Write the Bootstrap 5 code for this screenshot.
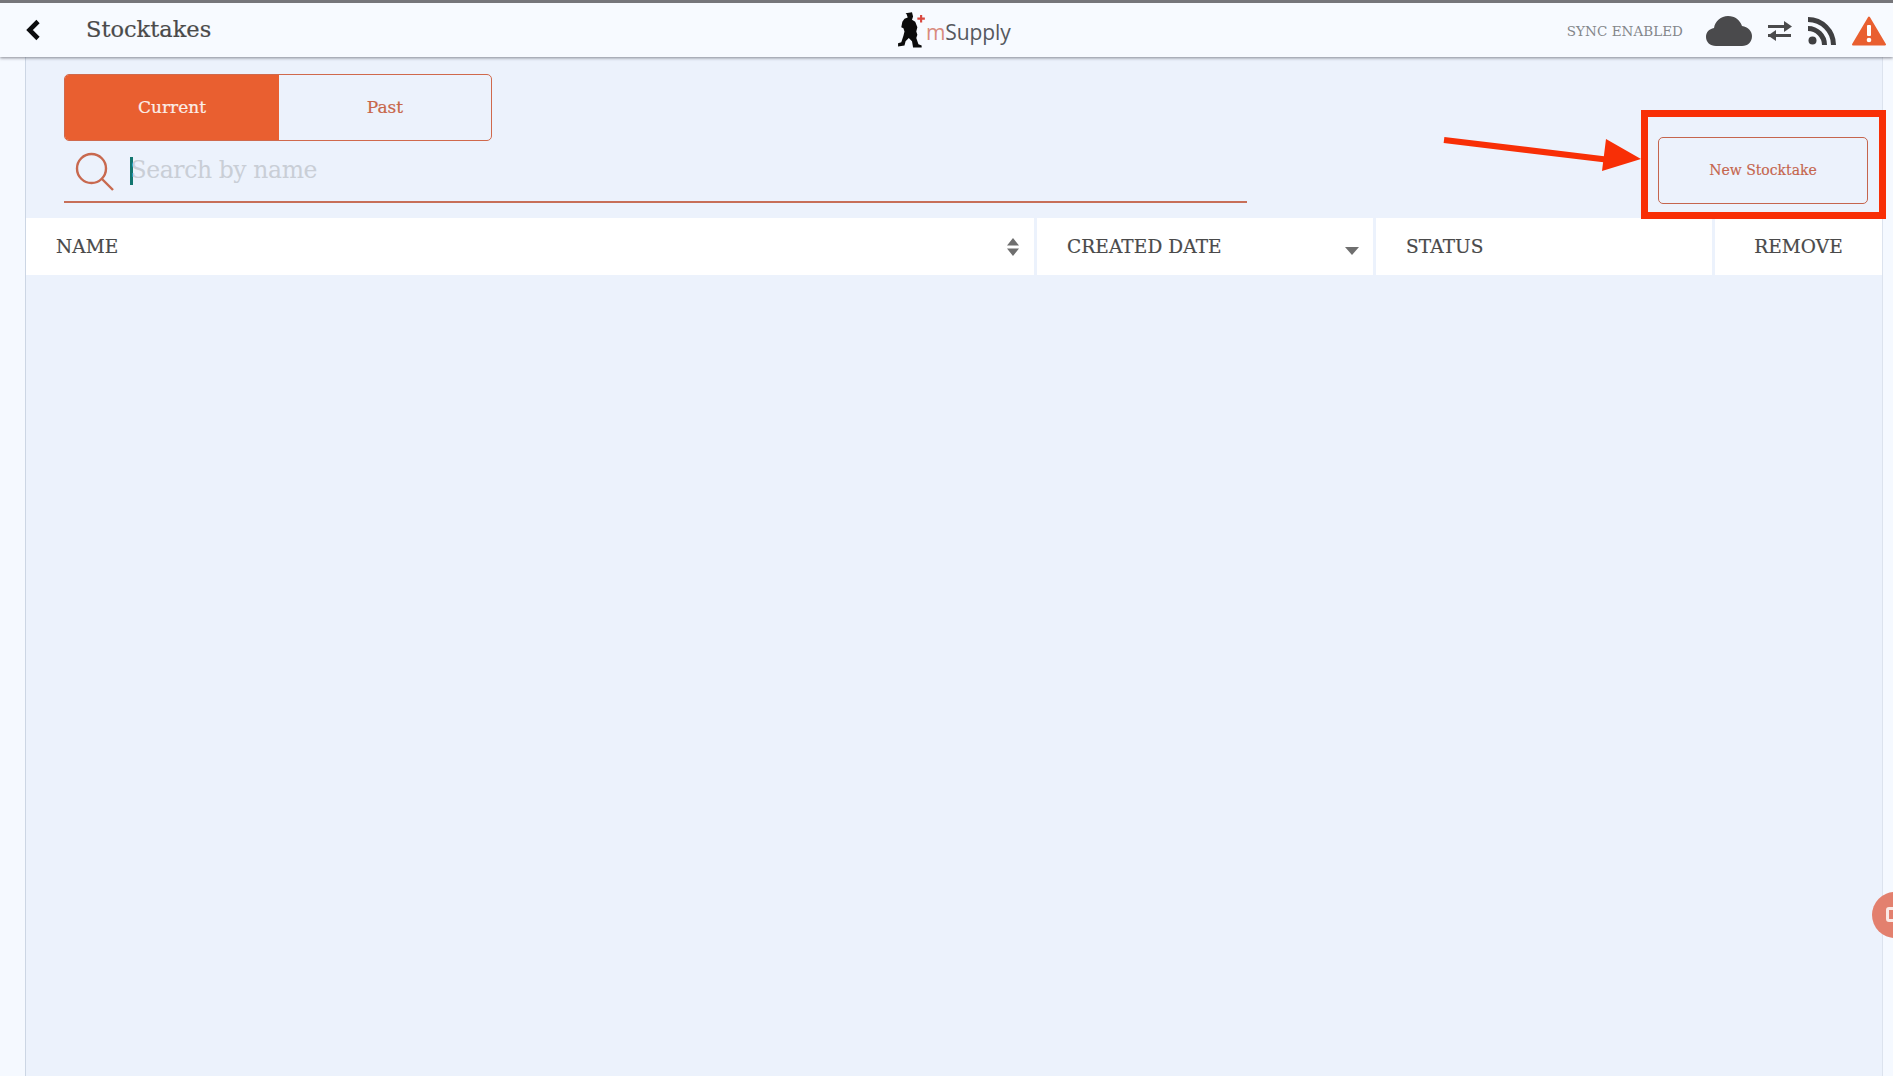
<!DOCTYPE html>
<html lang="en">
<head>
<meta charset="utf-8">
<title>Stocktakes</title>
<link href="https://cdn.jsdelivr.net/npm/bootstrap@5.3.0/dist/css/bootstrap.min.css" rel="stylesheet">
<style>
html,body{height:100%;overflow:hidden}
body{background:#f5f9ff;font-family:"DejaVu Serif",serif;color:#4a4a4a;border-top:3px solid #76767a;position:relative}
.topbar{height:54px;background:#f7faff;box-shadow:0 1px 3px rgba(60,60,70,.6);position:relative;z-index:2;padding:0}
.back-zone{width:86px}
.back-icon{margin-left:26px}
.page-title{font-size:22.5px;letter-spacing:0;color:#4a4a4a;-webkit-text-stroke:.2px #4a4a4a}
.logo-zone{position:absolute;left:897px;top:8px}
.logo-text{font-family:"Open Sans","Noto Sans",sans-serif;font-size:21px;letter-spacing:-.1px;color:#55585e;line-height:1;margin-top:11px;margin-left:-1px}
.logo-m{color:#d98a7d}
.sync-label{font-size:13.5px;letter-spacing:.05px;color:#84868a;margin-right:23px}
.status-icons{padding-right:7px;margin-top:2px}
.main-area{height:1019px;margin-left:25px;margin-right:10px;background:#ecf2fc;border-left:1.5px solid #ccd6e4;border-right:1px solid #dce3ee}
.tool-row{padding:17px 14px 0 38px;height:161px}
.tool-left{width:1183px}
.seg{width:428px;height:67px;border:1px solid #d0694c;border-radius:5px;overflow:hidden}
.seg-item{flex:1;border:0;background:transparent;color:#c8664a;font-family:inherit;font-size:17px;letter-spacing:0;padding:0;-webkit-text-stroke:.2px currentColor}
.seg-on{background:#e95f30;color:#fbeee8;flex:0 0 214px}
.search-row{height:62px;border-bottom:2px solid #c76f58}
.search-icon{margin-left:11px;margin-top:1px}
.caret-bar{width:2.500px;height:28px;background:#12766f;margin-left:15px;flex:none}
.search-ph{font-size:23.5px;letter-spacing:-.4px;color:#c9ced6;margin-left:-2px}
.new-btn{width:210px;height:67px;background:transparent;border:1px solid #c5654d;border-radius:5px;color:#c5654d;font-family:inherit;font-size:14px;letter-spacing:0;padding:0;margin-top:63px;-webkit-text-stroke:.15px currentColor}
.head-row{height:57px;gap:3px}
.head-cell{background:#fff;color:#4a4a4a;font-size:18.5px;letter-spacing:.1px;height:57px;padding-left:30px;padding-right:14px;-webkit-text-stroke:.2px #4a4a4a}
.cell-name{flex:0 0 1008px}
.cell-date{flex:0 0 336px}
.cell-status{flex:0 0 336px}
.cell-remove{flex:1;padding:0;justify-content:center!important}
.annot-box{position:absolute;left:1641px;top:107px;width:245px;height:109px;border:7px solid #f82f06;z-index:3}
.annot-arrow{position:absolute;left:1440px;top:125px;z-index:3}
.fab-bubble{position:absolute;left:1872px;top:889px;width:46px;height:46px;border-radius:50%;background:#e3806e;z-index:3}
.fab-glyph{position:absolute;left:14px;top:15px;width:16px;height:15px;border:3px solid #fbe9e5;border-radius:3px}
</style>
</head>
<body>
<nav class="navbar topbar d-flex align-items-center justify-content-between flex-nowrap">
  <div class="d-flex align-items-center">
    <div class="back-zone">
      <svg class="back-icon d-block" width="15" height="22" viewBox="0 0 15 22"><path d="M12 2.500 3.500 11 12 19.500" fill="none" stroke="#0c0c0e" stroke-width="4.600"/></svg>
    </div>
    <span class="page-title">Stocktakes</span>
  </div>
  <div class="logo-zone d-flex align-items-start">
    <svg width="30" height="41" viewBox="0 0 28 38"><path d="M8 2l6-1 1 4-1 3 3 2 2 5-1 4 1 3-1 3 2 6 3 1v2h-8l-1-6-3-3-3 3-1 4-6 1v-3l3-1 2-6 1-4-1-3-2-1 1-5 2-3 3-1-1-3z" fill="#0b0b0b"/><path d="M19 6h2.500V3.500h2V6H26v2h-2.500v2.500h-2V8H19z" fill="#d9483f"/></svg>
    <span class="logo-text"><span class="logo-m">m</span>Supply</span>
  </div>
  <div class="d-flex align-items-center status-icons">
    <span class="sync-label">SYNC ENABLED</span>
    <svg width="46" height="32" viewBox="0 0 46 32"><path d="M10 31C4 31 0 27 0 22c0-5 3-8 8-9 1-7 7-12 14-12 7 0 12 4 14 10 6 1 10 5 10 10 0 6-4 10-10 10z" fill="#4a4a4c"/></svg>
    <svg class="ms-3" width="24" height="20" viewBox="0 0 24 20"><path d="M0 5.500h17M0 14.500h23" stroke="#4a4a4c" stroke-width="2.800"/><path d="M16 0l8 5.500-8 5.500z" fill="#4a4a4c"/><path d="M8 9 0 14.500 8 20z" fill="#4a4a4c"/></svg>
    <svg class="ms-3" width="28" height="28" viewBox="0 0 28 28"><circle cx="4.500" cy="23.500" r="4" fill="#3f3f41"/><path d="M0 11.500C9 11.500 16.500 19 16.500 28M0 2.500C14 2.500 25.500 14 25.500 28" fill="none" stroke="#3f3f41" stroke-width="5"/></svg>
    <svg class="ms-3" width="34" height="30" viewBox="0 0 34 30"><path d="M17 1.500 33 28.500H1z" fill="#e95f30" stroke="#e95f30" stroke-width="2" stroke-linejoin="round"/><rect x="15" y="9" width="4" height="11" rx="1" fill="#fff"/><circle cx="17" cy="24" r="2.300" fill="#fff"/></svg>
  </div>
</nav>
<main class="main-area">
  <div class="tool-row d-flex justify-content-between align-items-start">
    <div class="tool-left">
      <div class="seg d-flex">
        <button type="button" class="seg-item seg-on">Current</button>
        <button type="button" class="seg-item">Past</button>
      </div>
      <div class="search-row d-flex align-items-center">
        <svg class="search-icon" width="40" height="40" viewBox="0 0 40 40"><circle cx="16.500" cy="16.500" r="14.500" fill="none" stroke="#c8694f" stroke-width="2.400"/><path d="M27 27l11 11" stroke="#c8694f" stroke-width="2.400"/></svg>
        <span class="caret-bar"></span>
        <span class="search-ph">Search by name</span>
      </div>
    </div>
    <button type="button" class="new-btn">New Stocktake</button>
  </div>
  <div class="head-row d-flex">
    <div class="head-cell cell-name d-flex align-items-center justify-content-between">
      <span>NAME</span>
      <svg width="14" height="20" viewBox="0 0 14 20"><path d="M7 1 13 8.500H1zM7 19 1 11.500H13z" fill="#6f6f6f"/></svg>
    </div>
    <div class="head-cell cell-date d-flex align-items-center justify-content-between">
      <span>CREATED DATE</span>
      <svg class="mt-2" width="14" height="8" viewBox="0 0 14 8"><path d="M0 0H14L7 8z" fill="#6f6f6f"/></svg>
    </div>
    <div class="head-cell cell-status d-flex align-items-center"><span>STATUS</span></div>
    <div class="head-cell cell-remove d-flex align-items-center"><span>REMOVE</span></div>
  </div>
</main>
<div class="annot-box"></div>
<svg class="annot-arrow" width="205" height="50" viewBox="0 0 205 50"><path d="M4 12 170 32" stroke="#f82f06" stroke-width="6"/><path d="M166 11 201 31 162 43z" fill="#f82f06"/></svg>
<div class="fab-bubble"><span class="fab-glyph"></span></div>
<script src="https://cdn.jsdelivr.net/npm/bootstrap@5.3.0/dist/js/bootstrap.bundle.min.js"></script>
</body>
</html>
